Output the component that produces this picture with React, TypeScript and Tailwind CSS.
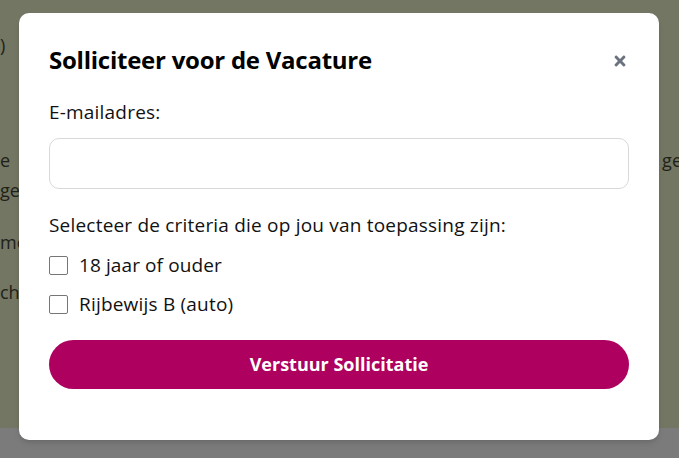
import React from "react";
import { FaTimes } from "react-icons/fa";

export default function App() {
  return (
    <div className="relative w-[679px] h-[458px] overflow-hidden" style={{ fontFamily: "'Open Sans', 'Noto Sans', sans-serif" }}>
      <div className="flex flex-col w-full h-full">
        <div className="h-[428px] bg-[#737662] overflow-hidden text-[18px] leading-[24px] text-[#1f2118] pt-[33px] whitespace-nowrap">
          <p>)</p>
          <p className="mt-[91px] flex justify-between -mr-[3px]">
            <span>e</span>
            <span>ge</span>
          </p>
          <p className="mt-[6px]">ge</p>
          <p className="mt-[28px]">mo</p>
          <p className="mt-[26px]">cht</p>
        </div>
        <div className="h-[30px] bg-[#7b7b7b]" />
      </div>

      <div className="absolute inset-0 flex justify-start items-start pt-[13px] pl-[19px]">
        <div className="w-[640px] bg-white rounded-[10px] pt-[31px] px-[30px] pb-[51px] flex flex-col text-[#111] shadow-md">
          <div className="flex items-center justify-between h-[32px]">
            <h2 className="text-[24px] font-bold leading-[32px] tracking-[-0.25px] text-black">Solliciteer voor de Vacature</h2>
            <button className="text-[#6b7280] mr-[1px] mt-[2px]">
              <FaTimes size={16} />
            </button>
          </div>
          <label className="mt-[24px] text-[19px] leading-[24px] tracking-[0.2px]">E-mailadres:</label>
          <input
            type="email"
            className="mt-[14px] h-[51px] w-full rounded-[10px] border border-[#d9d9d9] px-3 outline-none"
          />
          <p className="mt-[24px] text-[19px] leading-[24px] tracking-[0.2px]">Selecteer de criteria die op jou van toepassing zijn:</p>
          <label className="mt-[16px] flex items-center gap-[11px] text-[19px] leading-[24px] tracking-[0.1px]">
            <span className="w-[19px] h-[19px] border border-[#767676] rounded-[2px] bg-white shrink-0" />
            18 jaar of ouder
          </label>
          <label className="mt-[15px] flex items-center gap-[11px] text-[19px] leading-[24px] tracking-[0.2px]">
            <span className="w-[19px] h-[19px] border border-[#767676] rounded-[2px] bg-white shrink-0" />
            Rijbewijs B (auto)
          </label>
          <button className="mt-[24px] h-[49px] w-full rounded-full bg-[#ad005f] text-white text-[18px] font-bold">
            Verstuur Sollicitatie
          </button>
        </div>
      </div>
    </div>
  );
}
